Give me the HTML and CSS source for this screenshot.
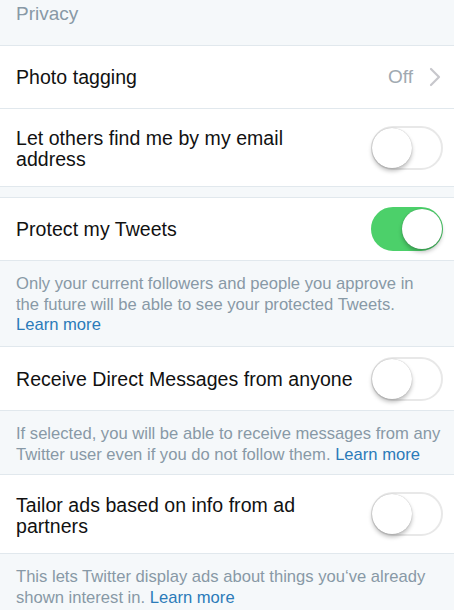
FILE: index.html
```html
<!DOCTYPE html>
<html>
<head>
<meta charset="utf-8">
<link rel="stylesheet" href="styles.css">
</head>
<body>
<div class="screen">
  <div class="section-head">Privacy</div>

  <div class="row h62">
    <span class="title">Photo tagging</span>
    <span class="value">Off
      <svg class="chev" width="12" height="20" viewBox="0 0 12 20"><path d="M2 2 L10 10 L2 18" fill="none" stroke="#c7c7cc" stroke-width="2.2" stroke-linecap="round" stroke-linejoin="round"/></svg>
    </span>
  </div>

  <div class="row h77">
    <span class="title two">Let others find me by my email<br>address</span>
    <span class="toggle"><span class="knob"></span></span>
  </div>

  <div class="spacer"></div>

  <div class="row h62">
    <span class="title">Protect my Tweets</span>
    <span class="toggle on"><span class="knob"></span></span>
  </div>

  <div class="desc d85">Only your current followers and people you approve in<br>the future will be able to see your protected Tweets.<br><a>Learn more</a></div>

  <div class="row h63">
    <span class="title">Receive Direct Messages from anyone</span>
    <span class="toggle"><span class="knob"></span></span>
  </div>

  <div class="desc d63">If selected, you will be able to receive messages from any<br>Twitter user even if you do not follow them. <a>Learn more</a></div>

  <div class="row h78">
    <span class="title two">Tailor ads based on info from ad<br>partners</span>
    <span class="toggle"><span class="knob"></span></span>
  </div>

  <div class="desc last">This lets Twitter display ads about things you‘ve already<br>shown interest in. <a>Learn more</a></div>
</div>
</body>
</html>
```

FILE: styles.css
```css
html, body {
  margin: 0;
  padding: 0;
  background: #f5f8fa;
}
body {
  font-family: "Liberation Sans", Arial, sans-serif;
  width: 454px;
  height: 610px;
  overflow: hidden;
}
.screen {
  display: flex;
  flex-direction: column;
}
.section-head {
  height: 46px;
  box-sizing: border-box;
  padding: 3px 16px 0;
  font-size: 19px;
  color: #8899a6;
  border-bottom: 1px solid #e1e8ed;
  background: #f5f8fa;
  line-height: 22px;
}
.row {
  background: #fff;
  display: flex;
  align-items: center;
  justify-content: space-between;
  padding: 0 11px 0 16px;
  border-bottom: 1px solid #e1e8ed;
  box-sizing: content-box;
}
.h62 { height: 62px; }
.h63 { height: 63px; }
.h77 { height: 77px; }
.h78 { height: 78px; }
.title {
  font-size: 19.5px;
  letter-spacing: 0.05px;
  line-height: 21px;
  color: #111;
  padding-top: 1px;
  white-space: nowrap;
}
.title.two { padding-top: 3px; }
.value {
  display: flex;
  align-items: center;
  gap: 16px;
  font-size: 19px;
  color: #a0a9b1;
  padding-right: 2px;
}
.chev { display: block; }
.spacer {
  height: 10px;
  background: #f5f8fa;
  border-bottom: 1px solid #e1e8ed;
}
.desc {
  background: #f5f8fa;
  border-bottom: 1px solid #e1e8ed;
  box-sizing: border-box;
  padding: 13px 8px 0 16px;
  font-size: 16.6px;
  line-height: 20.5px;
  color: #8899a6;
  white-space: nowrap;
}
.d85 { height: 86px; }
.d63 { height: 64px; }
.desc.last { height: 70px; border-bottom: none; }
.desc a { color: #2b7bb9; }
.toggle {
  position: relative;
  width: 72px;
  height: 44px;
  box-sizing: border-box;
  border-radius: 22px;
  border: 2px solid #e8e8e8;
  background: #fff;
  flex: none;
}
.toggle .knob {
  position: absolute;
  left: -1px;
  top: 0px;
  width: 40px;
  height: 40px;
  border-radius: 50%;
  background: #fff;
  box-shadow: 0 3px 4px rgba(0,0,0,0.25), 0 0 1px rgba(0,0,0,0.3);
}
.toggle.on {
  background: #4cd06a;
  border-color: #4cd06a;
}
.toggle.on .knob {
  left: auto;
  right: -1px;
}
```
